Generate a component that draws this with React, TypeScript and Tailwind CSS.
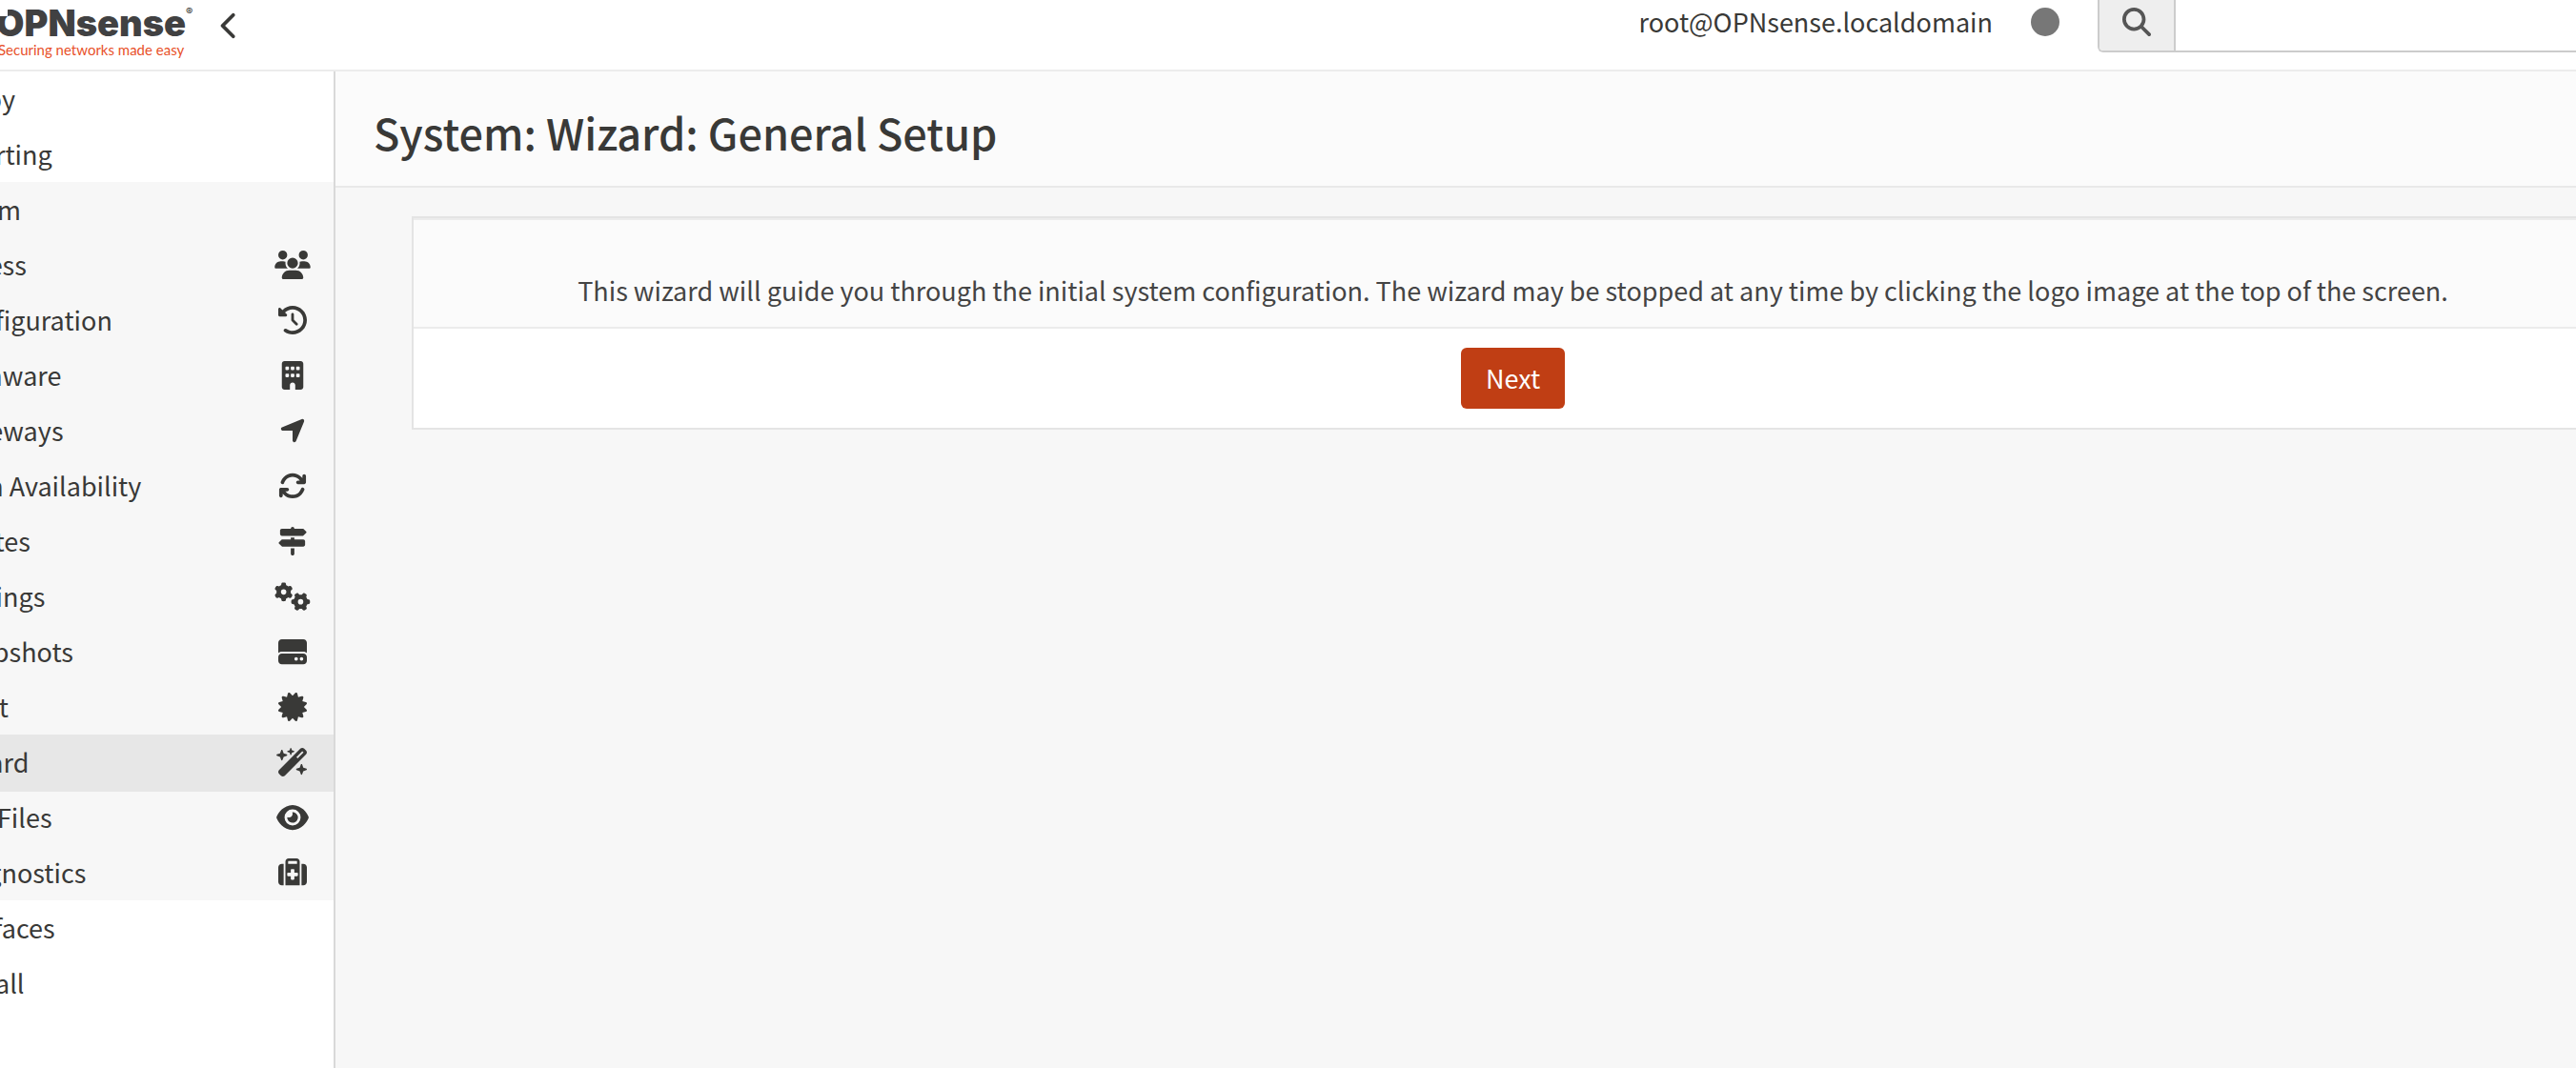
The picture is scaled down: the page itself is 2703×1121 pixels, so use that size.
import {
  FaArrowsRotate, FaBuilding, FaCertificate, FaChartArea, FaChevronLeft, FaCircle, FaClockRotateLeft, FaEye, FaFire,
  FaGears, FaHardDrive, FaLaptop, FaLocationArrow, FaMagnifyingGlass, FaServer, FaSignsPost, FaSitemap,
  FaSuitcaseMedical, FaUsers, FaWandMagicSparkles,
} from 'react-icons/fa6';
import type { IconType } from 'react-icons';

type Entry = { label: string; icon: IconType; iconWidth?: string; open?: boolean; active?: boolean };

const overview: Entry[] = [
  { label: 'Lobby', icon: FaLaptop, iconWidth: 'w-[38px]' },
  { label: 'Reporting', icon: FaChartArea },
  { label: 'System', icon: FaServer, open: true },
];
const system: Entry[] = [
  { label: 'Access', icon: FaUsers },
  { label: 'Configuration', icon: FaClockRotateLeft },
  { label: 'Firmware', icon: FaBuilding },
  { label: 'Gateways', icon: FaLocationArrow },
  { label: 'High Availability', icon: FaArrowsRotate },
  { label: 'Routes', icon: FaSignsPost },
  { label: 'Settings', icon: FaGears },
  { label: 'Snapshots', icon: FaHardDrive },
  { label: 'Trust', icon: FaCertificate },
  { label: 'Wizard', icon: FaWandMagicSparkles, active: true },
  { label: 'Log Files', icon: FaEye },
  { label: 'Diagnostics', icon: FaSuitcaseMedical },
];
const network: Entry[] = [
  { label: 'Interfaces', icon: FaSitemap, iconWidth: 'w-[34px]' },
  { label: 'Firewall', icon: FaFire, iconWidth: 'w-[26px]' },
];

function MenuItem({ label, icon: Icon, iconWidth = 'w-[30px]', open }: Entry) {
  return (
    <li>
      <a href="#" className={'flex h-[58px] items-center gap-3 pl-4 ' + (open ? 'bg-[#f7f7f7]' : '')}>
        <Icon className={'h-[30px] ' + iconWidth} />
        <span className="whitespace-nowrap">{label}</span>
      </a>
    </li>
  );
}

function SubmenuItem({ label, icon: Icon, active }: Entry) {
  return (
    <li>
      <a
        href="#"
        className={
          'flex h-[58px] items-center justify-between pr-6 pl-[73px] ' +
          (active ? 'bg-[#e7e7e7] shadow-[0_2px_0_#e7e7e7]' : '')
        }
      >
        <span className="whitespace-nowrap">{label}</span>
        <Icon className="h-[30px] w-[38px]" />
      </a>
    </li>
  );
}

export default function App() {
  return (
    <div className="flex min-h-screen flex-col overflow-hidden bg-[#f7f7f7] font-['Noto_Sans_CJK_SC',sans-serif] text-[27px] leading-10 text-[#393937]">
      <header className="flex h-[75px] items-start justify-between border-b-2 border-[#ececec] bg-white">
        <div className="flex items-start">
          <a href="#" className="relative -ml-1 flex w-[207px] flex-col">
            <span className="flex items-start">
              <span className="font-['Inter',sans-serif] text-[38px] leading-[48px] font-black text-[#414142]">OPNsense</span>
              <sup className="top-0 pt-1 font-['Inter',sans-serif] text-[11px] leading-4 font-bold">®</sup>
            </span>
            <span className="absolute top-2 left-1 h-[9px] w-2 bg-white" />
            <span className="-mt-1 pl-[2px] font-['Lato',sans-serif] text-[15px] leading-4 text-[#e8512a]">Securing networks made easy</span>
          </a>
          <button aria-label="Collapse menu" className="mt-3 ml-7">
            <FaChevronLeft className="h-[30px] w-5" />
          </button>
        </div>
        <div className="flex items-start">
          <span className="mt-[3px]">root@OPNsense.localdomain</span>
          <FaCircle className="mx-10 mt-2 text-[30px] text-[#777]" />
          <label className="flex h-[55px] overflow-hidden rounded-bl-md border-b-2 border-l-2 border-[#ccc]">
            <span className="flex w-20 justify-center border-r-2 border-[#ccc] bg-[#eee] pt-2 text-[30px] text-[#555]">
              <FaMagnifyingGlass />
            </span>
            <input type="search" aria-label="Search" className="w-[420px]" />
          </label>
        </div>
      </header>
      <div className="flex grow">
        <nav className="-ml-32 w-[480px] shrink-0 border-r-2 border-[#d9d9d9] bg-white">
          <ul>
            {overview.map((e) => <MenuItem key={e.label} {...e} />)}
            <li>
              <ul className="bg-[#f7f7f7]">{system.map((e) => <SubmenuItem key={e.label} {...e} />)}</ul>
            </li>
            {network.map((e) => <MenuItem key={e.label} {...e} />)}
          </ul>
        </nav>
        <main className="min-w-0 grow">
          <div className="flex h-[122px] items-center border-b-2 border-[#e9e9e9] bg-[#fbfbfb] pt-2 pl-10">
            <h1 className="text-[45px] leading-[56px] font-medium">System: Wizard: General Setup</h1>
          </div>
          <section className="-mr-10 ml-20 mt-[30px] border-2 border-[#e4e4e4] bg-white text-center">
            <p className="border-y-2 border-[#ececec] bg-[#fbfbfb] pt-[54px] pb-[18px] text-[#444]">
              This wizard will guide you through the initial system configuration. The wizard may be stopped at any time by clicking the logo image at the top of the screen.
            </p>
            <div className="flex justify-center py-5">
              <button className="h-16 rounded-md bg-[#c03e14] px-[26px] text-white">Next</button>
            </div>
          </section>
        </main>
      </div>
    </div>
  );
}
